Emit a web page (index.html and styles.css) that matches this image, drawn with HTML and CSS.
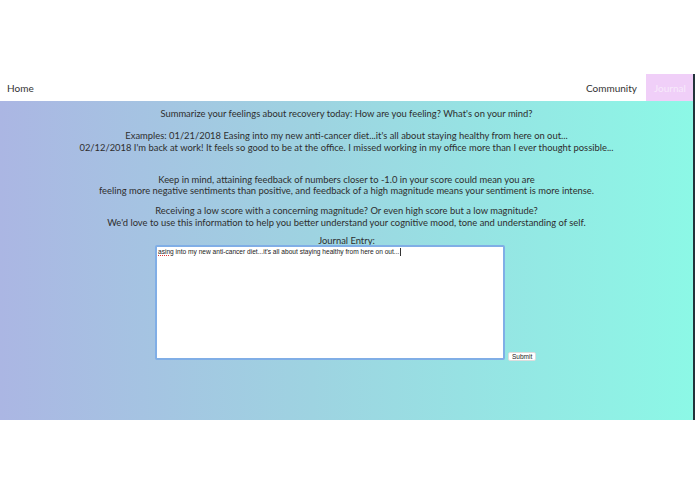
FILE: index.html
```html
<!DOCTYPE html>
<html>
<head>
<meta charset="utf-8">
<link rel="stylesheet" href="styles.css">
</head>
<body>
<div class="top"></div>
<div class="frame">
  <nav class="nav">
    <a class="nav-home">Home</a>
    <div class="nav-right">
      <a class="nav-link">Community</a>
      <a class="nav-link active">Journal</a>
    </div>
  </nav>
  <main class="main">
    <p class="p1">Summarize your feelings about recovery today: How are you feeling? What's on your mind?</p>
    <p class="p2">Examples: 01/21/2018 Easing into my new anti-cancer diet...it's all about staying healthy from here on out...<br>02/12/2018 I'm back at work! It feels so good to be at the office. I missed working in my office more than I ever thought possible...</p>
    <p class="p3">Keep in mind, attaining feedback of numbers closer to -1.0 in your score could mean you are<br>feeling more negative sentiments than positive, and feedback of a high magnitude means your sentiment is more intense.</p>
    <p class="p4">Receiving a low score with a concerning magnitude? Or even high score but a low magnitude?<br>We'd love to use this information to help you better understand your cognitive mood, tone and understanding of self.</p>
    <div class="label">Journal Entry:</div>
    <div class="entry">
      <div class="textarea"><span class="misspell">asing</span> into my new anti-cancer diet...it's all about staying healthy from here on out...<span class="caret"></span></div>
      <button class="submit">Submit</button>
    </div>
  </main>
</div>
</body>
</html>
```
FILE: styles.css
```css
html, body { margin: 0; padding: 0; background: #fff; }
body { font-family: "Lato", "Liberation Sans", sans-serif; color: #2e2e2e; }
.top { height: 74px; }
.frame { width: 695px; box-sizing: border-box; border-right: 2px solid #22333a; }
.nav { height: 27px; display: flex; justify-content: space-between; align-items: stretch; font-size: 10px; }
.nav-home { display: flex; align-items: center; padding-left: 7px; color: #333; }
.nav-right { display: flex; }
.nav-link { display: flex; align-items: center; padding: 0 9px 0 6px; color: #333; }
.nav-link.active { background: #f0cff8; color: #f7eafb; padding: 0 8px 0 8px; width: 31px; }
.main { height: 319px; background: linear-gradient(to right, #abb6e3 0%, #9ed3e1 45%, #8cf8e6 100%); text-align: center; font-size: 9.4px; line-height: 12px; padding-top: 7px; box-sizing: border-box; }
.main p { margin: 0; }
.p2 { margin-top: 10px !important; }
.p3 { margin-top: 20px !important; line-height: 11px; }
.p4 { margin-top: 9px !important; }
.label { margin-top: 6px; font-size: 9.4px; line-height: 12px; }
.entry { display: flex; align-items: flex-end; padding-left: 155px; margin-top: -2px; }
.textarea { width: 350px; height: 115px; box-sizing: border-box; background: #fff; border: 2px solid #80aee6; border-radius: 2px; text-align: left; font-family: "Liberation Sans", sans-serif; font-size: 6.6px; line-height: 9px; padding: 0 1px; color: #222; }
.misspell { text-decoration: underline dotted #d33; text-decoration-thickness: 1px; }
.caret { display: inline-block; width: 1px; height: 8px; background: #333; vertical-align: -2px; margin-left: 1px; }
.submit { margin-left: 3px; margin-bottom: -1px; height: 9px; padding: 0 3px; font-family: "Liberation Sans", sans-serif; font-size: 6.5px; line-height: 8px; background: #fff; border: 1px solid #ddd; border-radius: 2px; color: #222; }
```
